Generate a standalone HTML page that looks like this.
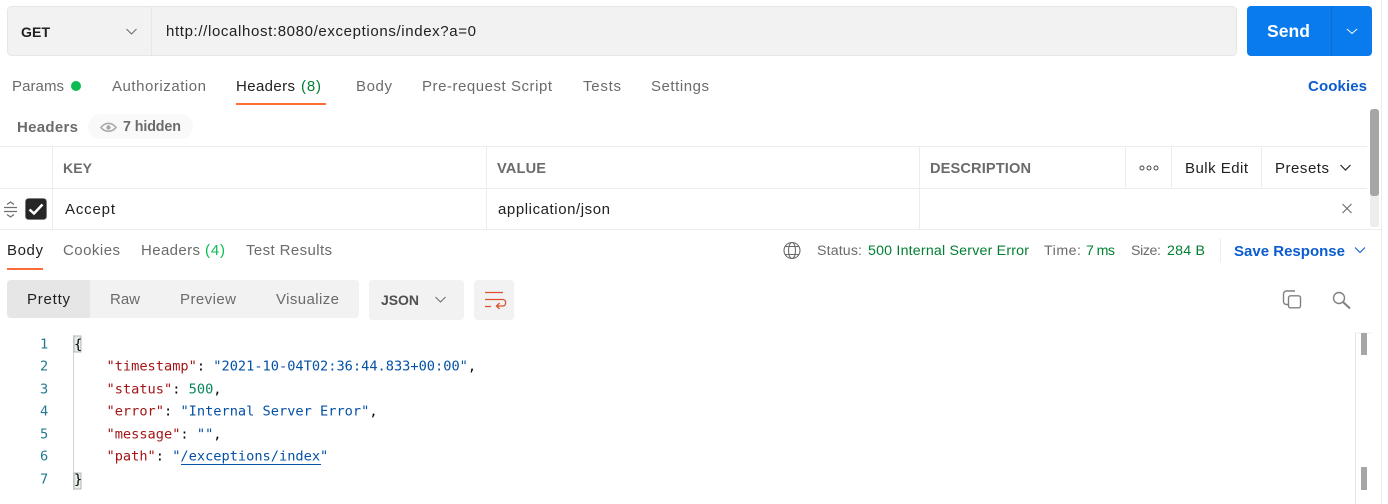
<!DOCTYPE html>
<html><head><meta charset="utf-8"><style>
html,body{margin:0;padding:0;background:#fff;width:1388px;height:504px;overflow:hidden}
svg{display:block;position:absolute;left:0;top:0}
text{font-family:"Liberation Sans",sans-serif;font-size:15px;fill:#6b6b6b;white-space:pre}
.m{font-family:"DejaVu Sans Mono","Liberation Mono",monospace;font-size:13.65px}
.d{fill:#212121}.b{font-weight:bold;font-size:14.6px}.g{fill:#007f31}.l{fill:#0cbb52}.u{fill:#0b5ccf;font-weight:bold;font-size:15px}
.k{fill:#a31515}.s{fill:#0451a5}.n{fill:#098658}.p{fill:#000}.t{fill:#237893}
.ln{stroke:#ededed;stroke-width:1;fill:none}
.i{fill:none;stroke:#6b6b6b;stroke-width:1}
.r{font-size:14.2px}
.c{fill:none;stroke:#808080;stroke-width:1.400}
</style></head><body>
<svg width="1388" height="504" viewBox="0 0 1388 504" xmlns="http://www.w3.org/2000/svg">
<!-- URL bar -->
<rect x="7.5" y="6.5" width="1229" height="49" rx="4" fill="#f2f2f2" stroke="#e6e6e6"/>
<path d="M151.5 7V55" class="ln" style="stroke:#e6e6e6"/>
<text x="21" y="37" class="b d" style="font-size:14px" textLength="29">GET</text>
<path d="M126.5 29l5 5 5-5" class="i"/>
<text x="166" y="36" class="d" textLength="310">http://localhost:8080/exceptions/index?a=0</text>
<!-- Send -->
<rect x="1247" y="6" width="125" height="50" rx="4" fill="#097bed"/>
<path d="M1331.5 6V56" stroke="#0a6fd4" fill="none"/>
<text x="1267" y="37" class="b" style="fill:#fff;font-size:17.5px" textLength="43">Send</text>
<path d="M1347 29l5 4.500 5-4.500" fill="none" stroke="#fff"/>
<!-- Request tabs -->
<text x="12" y="91" textLength="52">Params</text>
<circle cx="76" cy="86" r="5" fill="#0cbb52"/>
<text x="112" y="91" textLength="94">Authorization</text>
<text x="236" y="91" class="d" textLength="59">Headers</text>
<text x="301" y="91" class="g" textLength="20">(8)</text>
<rect x="236" y="103" width="90" height="2" fill="#ff6c37"/>
<text x="356" y="91" textLength="36">Body</text>
<text x="422" y="91" textLength="130">Pre-request Script</text>
<text x="583" y="91" textLength="38">Tests</text>
<text x="651" y="91" textLength="58">Settings</text>
<text x="1308" y="91" class="u" textLength="59">Cookies</text>
<!-- Headers row -->
<text x="17" y="132" class="b" style="font-size:15px" textLength="61">Headers</text>
<rect x="88" y="114" width="105" height="25" rx="12.500" fill="#f9f9f9"/>
<path d="M101 127.500c4-5.500 11-5.500 15 0c-4 5-11 5-15 0z" fill="none" stroke="#a6a6a6" stroke-width="1.500"/>
<circle cx="108.500" cy="127.500" r="2.200" fill="#a6a6a6"/>
<text x="123" y="131" class="b" style="font-size:14.3px" textLength="58">7 hidden</text>
<!-- Table -->
<path d="M0 146.500H1367M0 188.500H1367M0 229.500H1381" class="ln"/>
<path d="M52.500 147V229M486.500 147V229M919.500 147V229M1125.500 147V188M1171.500 147V188M1261.500 147V188" class="ln"/>
<text x="63" y="173" class="b" style="font-size:14px" textLength="29">KEY</text>
<text x="497" y="173" class="b" textLength="49">VALUE</text>
<text x="930" y="173" class="b" textLength="101">DESCRIPTION</text>
<circle cx="1142" cy="168" r="2" fill="none" stroke="#444"/>
<circle cx="1149" cy="168" r="2" fill="none" stroke="#444"/>
<circle cx="1156" cy="168" r="2" fill="none" stroke="#444"/>
<text x="1185" y="173" class="d" textLength="63">Bulk Edit</text>
<text x="1275" y="173" class="d" textLength="54">Presets</text>
<path d="M1340.500 165l5 5 5-5" fill="none" stroke="#212121" stroke-width="1.200"/>
<text x="65" y="214" class="d" textLength="50">Accept</text>
<text x="498" y="214" class="d" textLength="112">application/json</text>
<path d="M1342.500 204l9 9m0-9l-9 9" fill="none" stroke="#6b6b6b" stroke-width="1.100"/>
<path d="M4 207.500H17M4 211.500H17M7 204.500l3.500-2.500 3.500 2.500M7 214.500l3.500 2.500 3.500-2.500" fill="none" stroke="#707070" stroke-width="1.300"/>
<rect x="25.500" y="198.500" width="21" height="21" rx="3" fill="#262626" stroke="#6b6b6b" stroke-width=".6"/>
<path d="M29.500 209.500l4.500 4 8.500-9" fill="none" stroke="#fff" stroke-width="2.500"/>
<!-- Scrollbar -->
<rect x="1370" y="109" width="9" height="118" rx="3" fill="#ededed"/>
<rect x="1370" y="109" width="9" height="87" rx="3" fill="#a6a6a6"/>
<path d="M1381.500 0V504" stroke="#ededed" fill="none"/>
<!-- Response tabs -->
<text x="7" y="255" class="d" textLength="36">Body</text>
<rect x="7" y="268" width="36" height="2" fill="#ff6c37"/>
<text x="63" y="255" textLength="57">Cookies</text>
<text x="141" y="255" textLength="59">Headers</text>
<text x="205" y="255" class="l" textLength="20">(4)</text>
<text x="246" y="255" textLength="86">Test Results</text>
<g fill="none" stroke="#6b6b6b" stroke-width="1.100">
<circle cx="792" cy="250.500" r="8"/><ellipse cx="792" cy="250.500" rx="3.500" ry="8"/><path d="M785 246.500H799M785 254.500H799"/>
</g>
<text x="817" y="255" class="r" textLength="45">Status:</text>
<text x="868" y="255" class="g r" textLength="161">500 Internal Server Error</text>
<text x="1044" y="255" class="r" textLength="37">Time:</text>
<text x="1086" y="255" class="g r" textLength="29">7 ms</text>
<text x="1131" y="255" class="r" textLength="30">Size:</text>
<text x="1167" y="255" class="g r" textLength="38">284 B</text>
<path d="M1220.500 238V262" class="ln"/>
<text x="1234" y="256" class="u" textLength="111">Save Response</text>
<path d="M1355 247.500l5 5 5-5" fill="none" stroke="#0b5ccf" stroke-width="1.100"/>
<!-- Format controls -->
<rect x="7" y="280" width="352" height="38" rx="4" fill="#f2f2f2"/>
<path d="M11 280H90V318H11a4 4 0 0 1-4-4V284a4 4 0 0 1 4-4z" fill="#e6e6e6"/>
<text x="27" y="304" class="d" textLength="43">Pretty</text>
<text x="110" y="304" textLength="30">Raw</text>
<text x="180" y="304" textLength="56">Preview</text>
<text x="276" y="304" textLength="63">Visualize</text>
<rect x="369" y="280" width="95" height="40" rx="4" fill="#f2f2f2"/>
<text x="381" y="305" class="b" style="fill:#505050;font-size:14px" textLength="38">JSON</text>
<path d="M435.500 297l5 5 5-5" class="i"/>
<rect x="474" y="280" width="40" height="40" rx="4" fill="#f2f2f2"/>
<path d="M485 292.500H503M485 299.500H503c3.500 0 3.500 6.500 0 6.500H497M499.500 303l-3 3 3 3M485 306.500H491" fill="none" stroke="#d9512c" stroke-width="1.300"/>
<path d="M1288.500 304.500h-2a3 3 0 0 1-3-3v-7.500a3 3 0 0 1 3-3h8.500" class="c"/>
<rect x="1288.500" y="295.800" width="12" height="12" rx="2" class="c"/>
<circle cx="1339" cy="298" r="5.500" class="c"/>
<path d="M1343 302l7 6.500" fill="none" stroke="#808080" stroke-width="2"/>
<!-- Code -->
<path d="M73.500 335V490" stroke="#d3d3d3" stroke-width="1" fill="none"/>
<rect x="74" y="336" width="7" height="16" fill="#e8efe8" stroke="#b5b5b5"/>
<rect x="74" y="473" width="7" height="16" fill="#e8efe8" stroke="#b5b5b5"/>
<text x="40" y="348.500" class="m t">1</text>
<text x="40" y="370.500" class="m t">2</text>
<text x="40" y="393.500" class="m t">3</text>
<text x="40" y="415.500" class="m t">4</text>
<text x="40" y="438.500" class="m t">5</text>
<text x="40" y="460.500" class="m t">6</text>
<text x="40" y="483.500" class="m t">7</text>
<text x="74" y="348.500" class="m p">{</text>
<text x="106.500" y="370.500" class="m"><tspan class="k">"timestamp"</tspan><tspan class="p">: </tspan><tspan class="s">"2021-10-04T02:36:44.833+00:00"</tspan><tspan class="p">,</tspan></text>
<text x="106.500" y="393.500" class="m"><tspan class="k">"status"</tspan><tspan class="p">: </tspan><tspan class="n">500</tspan><tspan class="p">,</tspan></text>
<text x="106.500" y="415.500" class="m"><tspan class="k">"error"</tspan><tspan class="p">: </tspan><tspan class="s">"Internal Server Error"</tspan><tspan class="p">,</tspan></text>
<text x="106.500" y="438.500" class="m"><tspan class="k">"message"</tspan><tspan class="p">: </tspan><tspan class="s">""</tspan><tspan class="p">,</tspan></text>
<text x="106.500" y="460.500" class="m"><tspan class="k">"path"</tspan><tspan class="p">: </tspan><tspan class="s">"/exceptions/index"</tspan></text>
<rect x="181" y="464" width="140" height="1" fill="#0451a5"/>
<text x="74" y="483.500" class="m p">}</text>
<!-- Code scrollbar -->
<path d="M1355.500 333V504" stroke="#e3e3e3" fill="none"/>
<path d="M1355 333H1372" stroke="#ededed" fill="none"/>
<rect x="1361" y="333" width="6" height="22" fill="#a6a6a6"/>
<rect x="1361" y="467" width="6" height="23" fill="#a6a6a6"/>
</svg>
</body></html>
